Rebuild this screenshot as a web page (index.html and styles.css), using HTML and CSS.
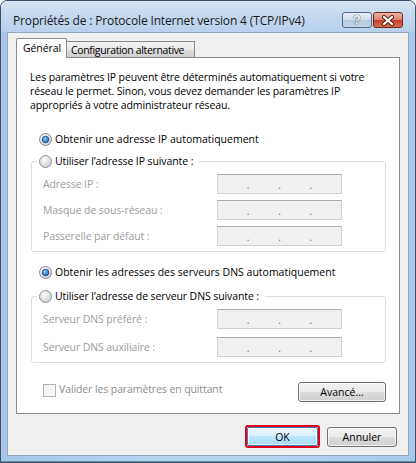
FILE: index.html
```html
<!DOCTYPE html>
<html lang="fr">
<head>
<meta charset="utf-8">
<title>Propriétés de : Protocole Internet version 4 (TCP/IPv4)</title>
<link rel="stylesheet" href="styles.css">
</head>
<body>
<div class="window">
  <div class="titlebar">
    <span class="title">Propriétés de : Protocole Internet version 4 (TCP/IPv4)</span>
    <div class="caption-btns">
      <div class="cap-btn help">?</div>
      <div class="cap-btn close">
        <svg width="14" height="11" viewBox="0 0 14 11">
          <path d="M3 2 L11 9 M11 2 L3 9" stroke="#4a1f18" stroke-width="4" stroke-linecap="round"/>
          <path d="M3 2 L11 9 M11 2 L3 9" stroke="#ffffff" stroke-width="2.2" stroke-linecap="round"/>
        </svg>
      </div>
    </div>
  </div>
  <div class="client">
    <div class="tabs">
      <div class="tab active">Général</div>
      <div class="tab">Configuration alternative</div>
    </div>
    <div class="panel">
      <p class="intro">Les paramètres IP peuvent être déterminés automatiquement si votre réseau le permet. Sinon, vous devez demander les paramètres IP appropriés à votre administrateur réseau.</p>

      <div class="radio-row first">
        <svg class="radio" width="13" height="13" viewBox="0 0 13 13">
          <defs>
            <radialGradient id="rg1" cx="40%" cy="35%" r="70%"><stop offset="0" stop-color="#ffffff"/><stop offset="1" stop-color="#cfd2d6"/></radialGradient>
            <radialGradient id="dot1" cx="40%" cy="35%" r="70%"><stop offset="0" stop-color="#7fd0ff"/><stop offset="1" stop-color="#1a5fb4"/></radialGradient>
          </defs>
          <circle cx="6.5" cy="6.5" r="6" fill="url(#rg1)" stroke="#7e8a96"/>
          <circle cx="6.5" cy="6.5" r="3.3" fill="url(#dot1)" stroke="#1c3e6e" stroke-width="0.8"/>
        </svg>
        <span>Obtenir une adresse IP automatiquement</span>
      </div>

      <fieldset class="group g1">
        <legend>
          <svg class="radio" width="13" height="13" viewBox="0 0 13 13">
            <defs><radialGradient id="rg2" cx="40%" cy="35%" r="70%"><stop offset="0" stop-color="#ffffff"/><stop offset="1" stop-color="#c8cbcf"/></radialGradient></defs>
            <circle cx="6.5" cy="6.5" r="6" fill="url(#rg2)" stroke="#8e9296"/>
          </svg>
          <span>Utiliser l’adresse IP suivante :</span>
        </legend>
        <div class="field-row"><span class="lbl">Adresse IP :</span><div class="ipbox"><i>.</i><i>.</i><i>.</i></div></div>
        <div class="field-row"><span class="lbl">Masque de sous-réseau :</span><div class="ipbox"><i>.</i><i>.</i><i>.</i></div></div>
        <div class="field-row"><span class="lbl">Passerelle par défaut :</span><div class="ipbox"><i>.</i><i>.</i><i>.</i></div></div>
      </fieldset>

      <div class="radio-row dns">
        <svg class="radio" width="13" height="13" viewBox="0 0 13 13">
          <defs>
            <radialGradient id="rg3" cx="40%" cy="35%" r="70%"><stop offset="0" stop-color="#ffffff"/><stop offset="1" stop-color="#cfd2d6"/></radialGradient>
            <radialGradient id="dot3" cx="40%" cy="35%" r="70%"><stop offset="0" stop-color="#7fd0ff"/><stop offset="1" stop-color="#1a5fb4"/></radialGradient>
          </defs>
          <circle cx="6.5" cy="6.5" r="6" fill="url(#rg3)" stroke="#7e8a96"/>
          <circle cx="6.5" cy="6.5" r="3.3" fill="url(#dot3)" stroke="#1c3e6e" stroke-width="0.8"/>
        </svg>
        <span>Obtenir les adresses des serveurs DNS automatiquement</span>
      </div>

      <fieldset class="group g2">
        <legend>
          <svg class="radio" width="13" height="13" viewBox="0 0 13 13">
            <defs><radialGradient id="rg4" cx="40%" cy="35%" r="70%"><stop offset="0" stop-color="#ffffff"/><stop offset="1" stop-color="#c8cbcf"/></radialGradient></defs>
            <circle cx="6.5" cy="6.5" r="6" fill="url(#rg4)" stroke="#8e9296"/>
          </svg>
          <span>Utiliser l’adresse de serveur DNS suivante :</span>
        </legend>
        <div class="field-row"><span class="lbl">Serveur DNS préféré :</span><div class="ipbox"><i>.</i><i>.</i><i>.</i></div></div>
        <div class="field-row r2"><span class="lbl">Serveur DNS auxiliaire :</span><div class="ipbox"><i>.</i><i>.</i><i>.</i></div></div>
      </fieldset>

      <div class="bottom-row">
        <div class="check">
          <span class="checkbox"></span>
          <span class="check-lbl">Valider les paramètres en quittant</span>
        </div>
        <div class="btn adv">Avancé...</div>
      </div>
    </div>
    <div class="footer">
      <div class="focus-ring"><div class="btn ok">OK</div></div>
      <div class="btn cancel">Annuler</div>
    </div>
  </div>
</div>
</body>
</html>
```

FILE: styles.css
```css
html, body {
  margin: 0;
  padding: 0;
  background: #ffffff;
}

body {
  font-family: "Open Sans", "Noto Sans", "Liberation Sans", sans-serif;
  font-size: 10.5px;
  color: #000;
}

.window {
  box-sizing: border-box;
  width: 416px;
  height: 463px;
  border: 1px solid #3d4f66;
  border-radius: 7px 7px 0 0;
  background: linear-gradient(to right, #a7c6e8 0%, #b9d4ef 40%, #b9d4ef 60%, #a9c8e9 100%);
  padding: 0 6px 6px 6px;
  display: flex;
  flex-direction: column;
  box-shadow: inset 0 -1px 0 #5c8fa6;
}

.titlebar {
  box-sizing: border-box;
  height: 31px;
  padding: 7px 12px 0 12px;
  display: flex;
  align-items: center;
  justify-content: space-between;
  margin: 0 -6px;
  border-radius: 6px 6px 0 0;
  background: linear-gradient(to bottom, #d6e4f3 0%, #c4d8ee 45%, #b9d1ec 100%);
}

.title {
  font-size: 12px;
  color: #1a1a1a;
  letter-spacing: -0.15px;
}

.caption-btns {
  display: flex;
  gap: 1px;
  align-self: flex-start;
  margin-top: 4px;
}

.cap-btn {
  box-sizing: border-box;
  width: 30px;
  height: 16px;
  border: 1px solid #56698a;
  border-radius: 3px;
  display: flex;
  align-items: center;
  justify-content: center;
}

.help {
  background: linear-gradient(to bottom, #e9eff7 0%, #cfdbe9 48%, #b6c8dc 52%, #c7d6e6 100%);
  color: #ffffff;
  font-family: "Liberation Sans", sans-serif;
  font-weight: bold;
  font-size: 12px;
  line-height: 1;
  text-shadow: 0 0 1px #4d5a6a, 0 0 1px #4d5a6a, 0 0 1px #4d5a6a;
}

.close {
  border-color: #6c2a22;
  background: linear-gradient(to bottom, #eeb4a6 0%, #dd806b 48%, #c6432b 52%, #d9684d 100%);
}

.client {
  box-sizing: border-box;
  flex: 1;
  background: #f0f0f0;
  border: 1px solid #8ea6c2;
  padding: 5px 8px 0 8px;
  display: flex;
  flex-direction: column;
}

.tabs {
  display: flex;
  align-items: flex-end;
  height: 19px;
}

.tab {
  box-sizing: border-box;
  border: 1px solid #898c95;
  border-bottom: none;
  height: 16px;
  padding: 0 2px 0 4px;
  display: flex;
  align-items: center;
  background: linear-gradient(to bottom, #f2f2f2 0%, #ebebeb 50%, #dddddd 51%, #cfcfcf 100%);
  color: #000;
  letter-spacing: -0.35px;
  white-space: nowrap;
  overflow: hidden;
  width: 128px;
}

.tab.active {
  position: relative;
  z-index: 1;
  width: 51px;
  height: 20px;
  margin-bottom: -1px;
  background: #ffffff;
  padding-left: 6px;
  letter-spacing: -0.1px;
  border-radius: 2px 2px 0 0;
  padding-bottom: 1px;
}

.tab.active + .tab {
  border-left: none;
  padding-left: 4px;
}

.panel {
  box-sizing: border-box;
  height: 357px;
  background: #ffffff;
  border: 1px solid #898c95;
  padding: 12px 13px 0 14px;
  display: flex;
  flex-direction: column;
}

.intro {
  margin: 0 0 0 -1px;
  line-height: 14px;
  letter-spacing: -0.12px;
  width: 345px;
}

.radio-row {
  display: flex;
  align-items: center;
  height: 16px;
  padding-left: 8px;
  gap: 3px;
}

.radio-row.first {
  margin-top: 19px;
}

.radio-row.dns {
  margin-top: 12px;
}

.radio {
  display: block;
  flex: none;
}

.group {
  margin: 6px 0 0 0;
  padding: 0 0 5px 0;
  border: 1px solid #d5dfe5;
  border-radius: 3px;
  min-width: 0;
}

.group.g2 {
  margin-top: 8px;
}

legend {
  margin-left: 5px;
  padding: 0 6px 0 2px;
  height: 16px;
  display: flex;
  align-items: center;
  gap: 3px;
  letter-spacing: -0.1px;
}

.field-row {
  display: flex;
  align-items: center;
  height: 20px;
  margin-top: 6px;
  padding-left: 11px;
}

.field-row:first-of-type {
  margin-top: 5px;
}

.g2 .field-row.r2 {
  margin-top: 8px;
}

.lbl {
  width: 174px;
  color: #9d9d9d;
  letter-spacing: -0.1px;
}

.ipbox {
  box-sizing: border-box;
  width: 125px;
  height: 20px;
  background: #f0f0f0;
  border: 1px solid #cfd1d4;
  border-top-color: #a9abb0;
  display: flex;
  justify-content: space-evenly;
  align-items: center;
}

.ipbox i {
  font-style: normal;
  color: #6a6a6a;
  font-size: 10px;
  line-height: 10px;
  margin-top: 2px;
}

.bottom-row {
  margin-top: 17px;
  display: flex;
  justify-content: space-between;
  align-items: flex-start;
  padding-left: 12px;
}

.check {
  display: flex;
  align-items: center;
  gap: 3px;
  height: 16px;
  margin-top: 1px;
}

.checkbox {
  box-sizing: border-box;
  width: 13px;
  height: 13px;
  border: 1px solid #b2b2b2;
  background: linear-gradient(to bottom right, #f0f0f0, #fbfbfb);
  margin-top: 3px;
}

.check-lbl {
  color: #8d8d8d;
  letter-spacing: -0.1px;
}

.btn {
  box-sizing: border-box;
  height: 20px;
  border: 1px solid #707070;
  border-radius: 3px;
  background: linear-gradient(to bottom, #f2f2f2 0%, #ebebeb 49%, #dddddd 50%, #cfcfcf 100%);
  box-shadow: inset 0 0 0 1px rgba(255, 255, 255, 0.7);
  display: flex;
  align-items: center;
  justify-content: center;
  color: #000;
}

.btn.adv {
  width: 88px;
  margin-top: 2px;
}

.footer {
  display: flex;
  justify-content: flex-end;
  align-items: center;
  gap: 7px;
  margin-top: 11px;
  padding-right: 3px;
}

.focus-ring {
  border: 2px solid #e3001b;
  border-radius: 3px;
  display: flex;
}

.btn.ok {
  width: 71px;
  height: 19px;
  border-color: #3c7fb1;
  border-radius: 2px;
  background: linear-gradient(to bottom, #eaf6fd 0%, #d9f0fc 49%, #bee6fd 50%, #a7d9f5 100%);
}

.btn.cancel {
  width: 70px;
}
```
